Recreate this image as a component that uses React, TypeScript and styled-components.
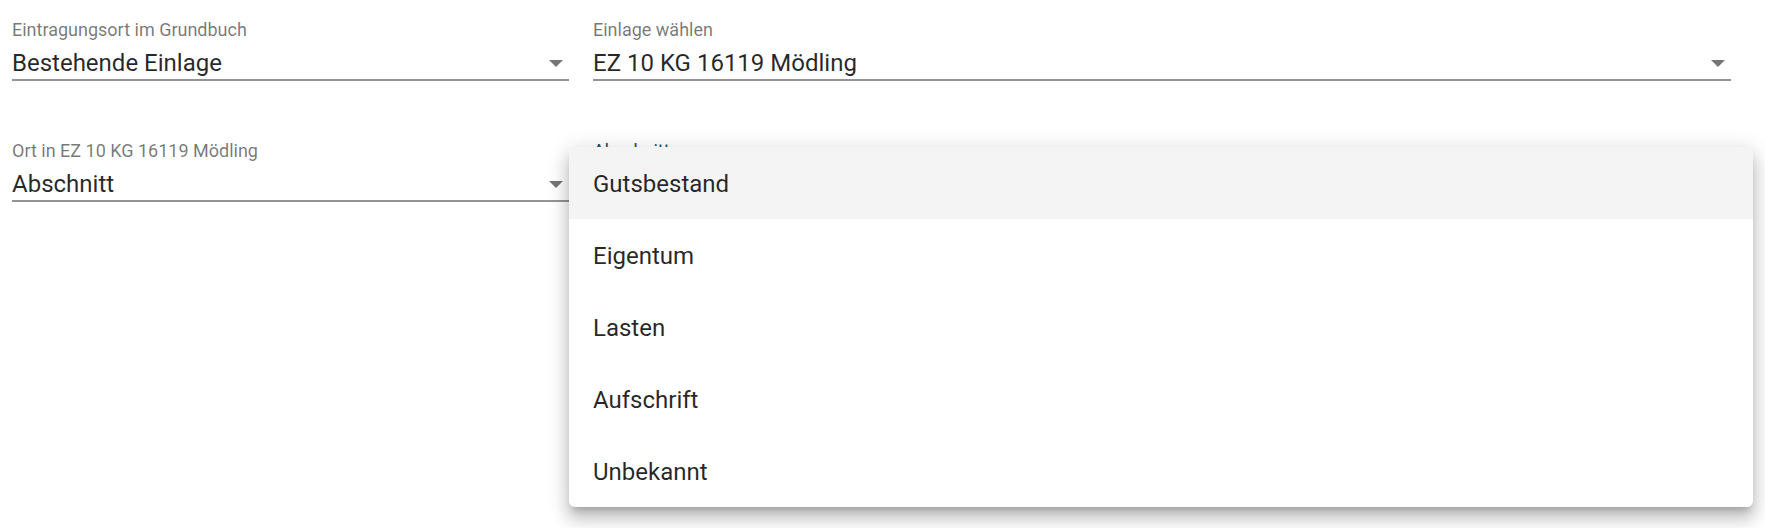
import styled, { createGlobalStyle } from "styled-components";

type Option = { value: string; label: string };

const GlobalStyle = createGlobalStyle`
  html, body {
    margin: 0;
    padding: 0;
    background: #ffffff;
  }
  body {
    font-family: Roboto, "Noto Sans", "Liberation Sans", sans-serif;
    font-weight: 400;
  }
`;

const sections: Option[] = [
  { value: "gutsbestand", label: "Gutsbestand" },
  { value: "eigentum", label: "Eigentum" },
  { value: "lasten", label: "Lasten" },
  { value: "aufschrift", label: "Aufschrift" },
  { value: "unbekannt", label: "Unbekannt" },
];

const SelectField = ({
  label,
  value,
  focused,
  children,
}: {
  label: string;
  value: string;
  focused?: boolean;
  children?: React.ReactNode;
}) => (
  <Field>
    <Label $focused={focused}>{label}</Label>
    <SelectBox>
      <Value>{value}</Value>
      <Arrow />
    </SelectBox>
    {children}
  </Field>
);

const App = () => {
  return (
    <>
      <GlobalStyle />
      <Page>
        <FormGrid>
          <SelectField label="Eintragungsort im Grundbuch" value="Bestehende Einlage" />
          <SelectField label="Einlage wählen" value="EZ 10 KG 16119 Mödling" />
          <SelectField label="Ort in EZ 10 KG 16119 Mödling" value="Abschnitt" />
          <SelectField label="Abschnitt" value="Gutsbestand" focused>
            <Menu role="listbox">
              {sections.map((s, i) => (
                <MenuItem key={s.value} $selected={i === 0} role="option">
                  {s.label}
                </MenuItem>
              ))}
            </Menu>
          </SelectField>
        </FormGrid>
      </Page>
    </>
  );
};

export default App;

const Page = styled.div`
  min-height: 528px;
  padding: 21px 10px 0 12px;
  box-sizing: border-box;
  position: relative;
`;

const FormGrid = styled.div`
  display: grid;
  grid-template-columns: 1fr 2fr;
  row-gap: 61px;
`;

const Field = styled.div`
  position: relative;
  display: flex;
  flex-direction: column;
  padding-right: 24px;
  min-width: 0;
`;

const Label = styled.label<{ $focused?: boolean }>`
  font-size: 18px;
  line-height: 18px;
  height: 18px;
  color: ${(p) => (p.$focused ? "#28466c" : "rgba(0, 0, 0, 0.54)")};
  white-space: nowrap;
`;

const SelectBox = styled.div`
  position: relative;
  margin-top: 9px;
  padding-bottom: 1px;
  border-bottom: 2px solid rgba(0, 0, 0, 0.42);
  padding-right: 36px;
`;

const Value = styled.div`
  font-size: 24px;
  line-height: 30px;
  height: 30px;
  color: rgba(0, 0, 0, 0.85);
  white-space: nowrap;
  overflow: hidden;
  text-overflow: ellipsis;
`;

const Arrow = styled.span`
  position: absolute;
  right: 6px;
  top: 12px;
  width: 0;
  height: 0;
  border-left: 7.5px solid transparent;
  border-right: 7.5px solid transparent;
  border-top: 7.5px solid rgba(0, 0, 0, 0.54);
`;

const Menu = styled.ul`
  position: absolute;
  top: 5px;
  left: -24px;
  width: calc(100% + 22px);
  margin: 0;
  padding: 0;
  list-style: none;
  background: #ffffff;
  border-radius: 6px;
  overflow: hidden;
  box-shadow: 0 7.5px 7.5px -4.5px rgba(0, 0, 0, 0.2),
    0 12px 15px 1.5px rgba(0, 0, 0, 0.14),
    0 4.5px 21px 3px rgba(0, 0, 0, 0.12);
  z-index: 10;
`;

const MenuItem = styled.li<{ $selected?: boolean }>`
  height: 72px;
  box-sizing: border-box;
  padding: 3px 24px 0;
  font-size: 24px;
  line-height: 69px;
  color: rgba(0, 0, 0, 0.85);
  background: ${(p) => (p.$selected ? "rgba(0, 0, 0, 0.045)" : "transparent")};
  white-space: nowrap;
`;
